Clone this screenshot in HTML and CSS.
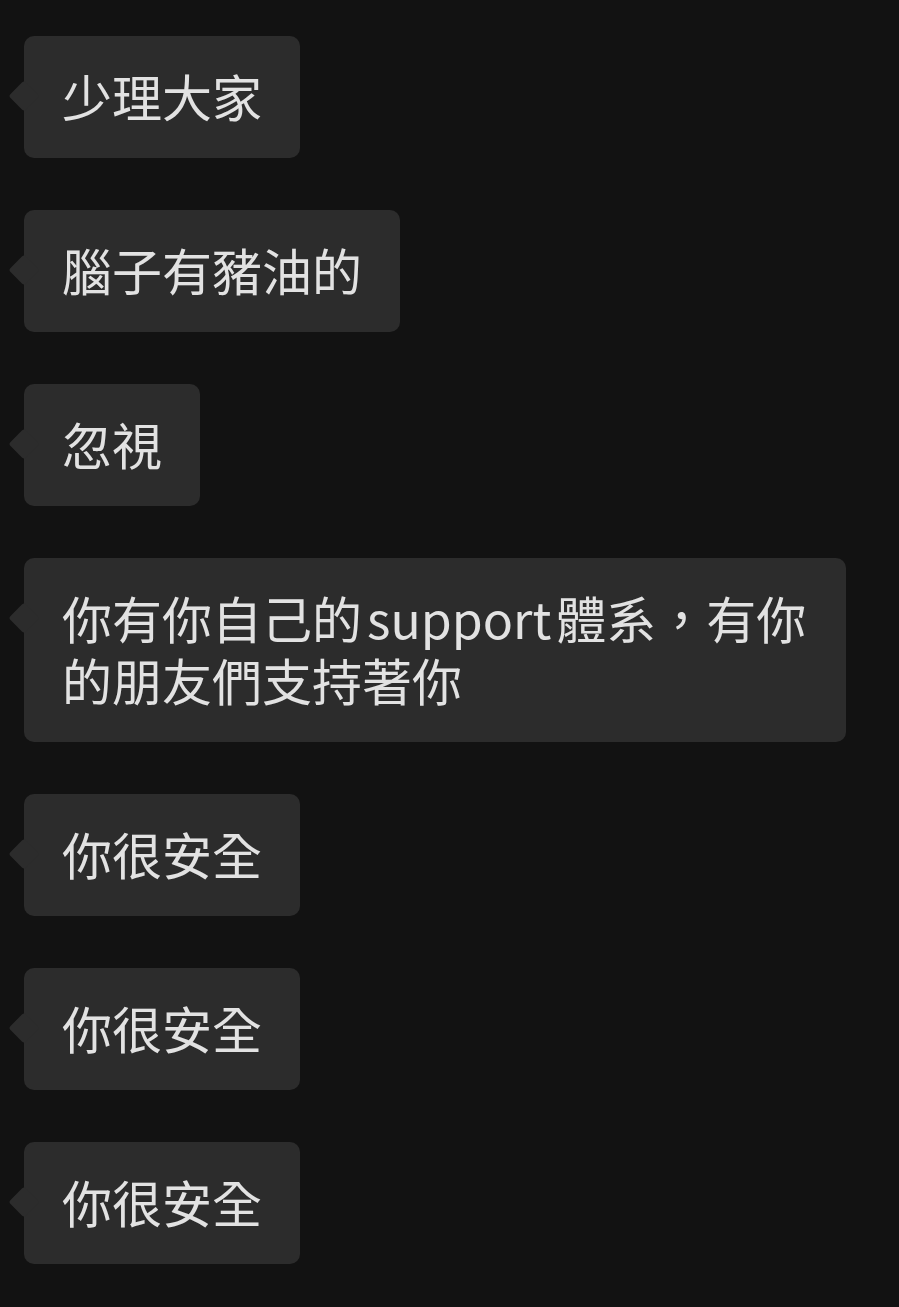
FILE: index.html
```html
<!DOCTYPE html>
<html lang="zh-Hant">
<head>
    <meta charset="UTF-8">
    <meta name="viewport" content="width=device-width, initial-scale=1.0">
    <title>Chat</title>
    <link rel="stylesheet" href="styles.css">
</head>
<body>
    <div class="chat">
        <div class="msg"><div class="bubble">少理大家</div></div>
        <div class="msg"><div class="bubble">腦子有豬油的</div></div>
        <div class="msg"><div class="bubble">忽視</div></div>
        <div class="msg"><div class="bubble">你有你自己的<span class="latin">support</span>體系，有你的朋友們支持著你</div></div>
        <div class="msg"><div class="bubble">你很安全</div></div>
        <div class="msg"><div class="bubble">你很安全</div></div>
        <div class="msg"><div class="bubble">你很安全</div></div>
    </div>
</body>
</html>
```

FILE: styles.css
```css
/* Page */
body {
    margin: 0;
    background-color: #121212;
    font-family: "Noto Sans CJK TC", "Noto Sans", sans-serif;
}

/* Message list */
.chat {
    display: flex;
    flex-direction: column;
    gap: 52px;
    padding: 36px 24px;
}

.msg {
    display: flex;
}

/* Incoming bubble */
.bubble {
    position: relative;
    max-width: 746px;
    padding: 28px 38px 32px;
    background-color: #2c2c2c;
    border-radius: 10px;
    color: #e2e2e2;
    font-size: 50px;
    line-height: 62px;
}

/* Latin words get a little air, like the phone does */
.bubble .latin {
    display: inline-block;
    margin: 0 5px;
}

/* Little tail on the left */
.bubble::before {
    content: "";
    position: absolute;
    left: -11px;
    top: 49px;
    width: 22px;
    height: 22px;
    background-color: #2c2c2c;
    border-radius: 3px;
    transform: rotate(45deg);
}
```
